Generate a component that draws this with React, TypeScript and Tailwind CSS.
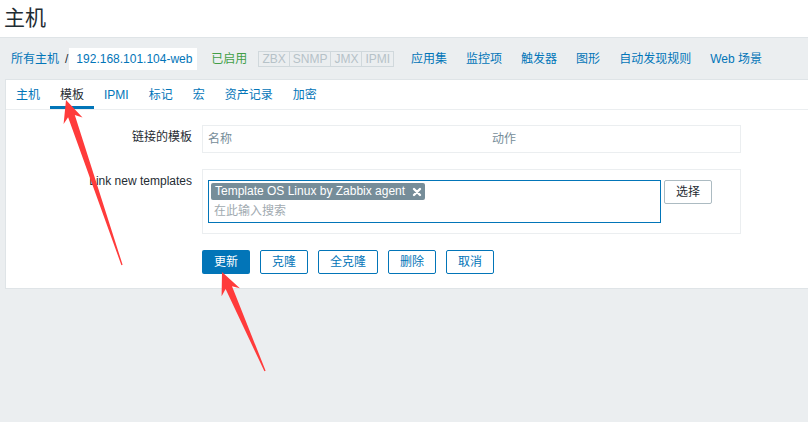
import type { ReactNode } from "react";

const font = "font-['Liberation_Sans','Noto_Sans_CJK_SC',sans-serif]";

const navLinks = ["应用集", "监控项", "触发器", "图形", "自动发现规则", "Web 场景"];
const tabs = ["主机", "模板", "IPMI", "标记", "宏", "资产记录", "加密"];
const statuses = ["ZBX", "SNMP", "JMX", "IPMI"];

// screenshot-tool style red arrow, from tail to tip
function arrowPoints(tx: number, ty: number, px: number, py: number) {
  const len = Math.hypot(px - tx, py - ty);
  const dx = (px - tx) / len;
  const dy = (py - ty) / len;
  const nx = -dy;
  const ny = dx;
  const head = 22;
  const notch = 17;
  const bx = px - dx * head;
  const by = py - dy * head;
  const sx = px - dx * notch;
  const sy = py - dy * notch;
  const pt = (x: number, y: number) => `${x.toFixed(1)},${y.toFixed(1)}`;
  return [
    pt(px, py),
    pt(bx + nx * 10, by + ny * 10),
    pt(sx + nx * 3.5, sy + ny * 3.5),
    pt(tx + nx * 0.6, ty + ny * 0.6),
    pt(tx - nx * 0.6, ty - ny * 0.6),
    pt(sx - nx * 3.5, sy - ny * 3.5),
    pt(bx - nx * 10, by - ny * 10),
  ].join(" ");
}

function FormRow({ label, children }: { label: string; children: ReactNode }) {
  return (
    <div className="flex items-start">
      <div className="w-[186px] shrink-0 pt-[5px] text-right text-[12px] leading-[14px] text-[#1f2c33]">{label}</div>
      <div className="ml-[10px]">{children}</div>
    </div>
  );
}

function OutlineButton({ label, w }: { label: string; w: string }) {
  return (
    <button className={`${w} h-[24px] rounded-[2px] border border-[#0275b8] bg-white text-[12px] text-[#0275b8]`}>
      {label}
    </button>
  );
}

export default function App() {
  return (
    <div className={`relative h-[422px] w-[808px] overflow-hidden bg-[#ebeef0] ${font}`}>
      {/* Page header */}
      <div className="h-[38px] border-b border-[#dfe4e7] bg-white px-[4px] pt-[3px] text-[21px] leading-[30px] text-[#1f2c33]">
        主机
      </div>

      {/* Breadcrumb + host nav */}
      <div className="flex h-[41px] items-center pl-[11px] text-[12px] text-[#0275b8]">
        <span>所有主机</span>
        <span className="ml-[6px] text-[#1f2c33]">/</span>
        <span className="ml-[1px] flex h-[22px] w-[128px] items-center bg-white pl-[7px] text-[#0275b8]">
          192.168.101.104-web
        </span>
        <span className="ml-[14px] text-[#429e47]">已启用</span>
        <div className="ml-[11px] flex">
          {statuses.map((s, i) => (
            <span
              key={s}
              className={`h-[16px] border border-[#d0d8dc] px-[3px] text-[12px] leading-[14px] text-[#b6c2c8] ${i > 0 ? "border-l-0" : ""}`}
            >
              {s}
            </span>
          ))}
        </div>
        <div className="ml-[17px] flex gap-[19px]">
          {navLinks.map((l) => (
            <span key={l}>{l}</span>
          ))}
        </div>
      </div>

      {/* Main panel */}
      <div className="ml-[5px] h-[210px] border border-r-0 border-[#dfe4e7] bg-white">
        <div className="flex h-[30px] border-b border-[#ebeef0] text-[12px]">
          {tabs.map((t, i) => (
            <div
              key={t}
              className={`flex items-center border-b-[3px] px-[10px] pt-[3px] ${
                i === 1 ? "border-[#0275b8] text-[#1f2c33]" : "border-transparent text-[#0275b8]"
              }`}
            >
              {t}
            </div>
          ))}
        </div>

        <div className="flex flex-col gap-[16px] pt-[15px]">
          <FormRow label="链接的模板">
            <div className="flex h-[28px] w-[539px] items-center border border-[#ebeef0] text-[12px] text-[#768d99]">
              <span className="w-[289px] pl-[5px]">名称</span>
              <span>动作</span>
            </div>
          </FormRow>

          <FormRow label="Link new templates">
            <div className="flex h-[65px] w-[539px] items-start border border-[#ebeef0] pl-[5px] pt-[10px]">
              <div className="flex h-[43px] w-[453px] flex-col items-start border border-[#0275b8] pl-[2px] pt-[2px]">
                <span className="flex h-[17px] items-center gap-[7px] rounded-[2px] bg-[#768d99] pl-[4px] pr-[3px] text-[12px] leading-[17px] text-white">
                  Template OS Linux by Zabbix agent
                  <svg width="10" height="10" viewBox="0 0 10 10">
                    <path d="M2 2 L8 8 M8 2 L2 8" stroke="white" strokeWidth="2.4" strokeLinecap="round" />
                  </svg>
                </span>
                <div className="pl-[3px] pt-[4px] text-[12px] leading-[14px] text-[#a1aab0]">在此输入搜索</div>
              </div>
              <button className="ml-[3px] h-[24px] w-[48px] rounded-[2px] border border-[#acbbc2] bg-white text-[12px] text-[#1f2c33]">
                选择
              </button>
            </div>
          </FormRow>

          <div className="ml-[196px] flex gap-[10px]">
            <button className="h-[24px] w-[48px] rounded-[2px] bg-[#0275b8] text-[12px] text-white">更新</button>
            <OutlineButton label="克隆" w="w-[48px]" />
            <OutlineButton label="全克隆" w="w-[60px]" />
            <OutlineButton label="删除" w="w-[48px]" />
            <OutlineButton label="取消" w="w-[48px]" />
          </div>
        </div>
      </div>

      {/* Annotation arrows */}
      <svg className="pointer-events-none absolute left-0 top-0" width="808" height="422">
        <polygon points={arrowPoints(122, 265, 66, 100)} fill="#ff3b3b" />
        <polygon points={arrowPoints(265, 371, 222, 272)} fill="#ff3b3b" />
      </svg>
    </div>
  );
}
